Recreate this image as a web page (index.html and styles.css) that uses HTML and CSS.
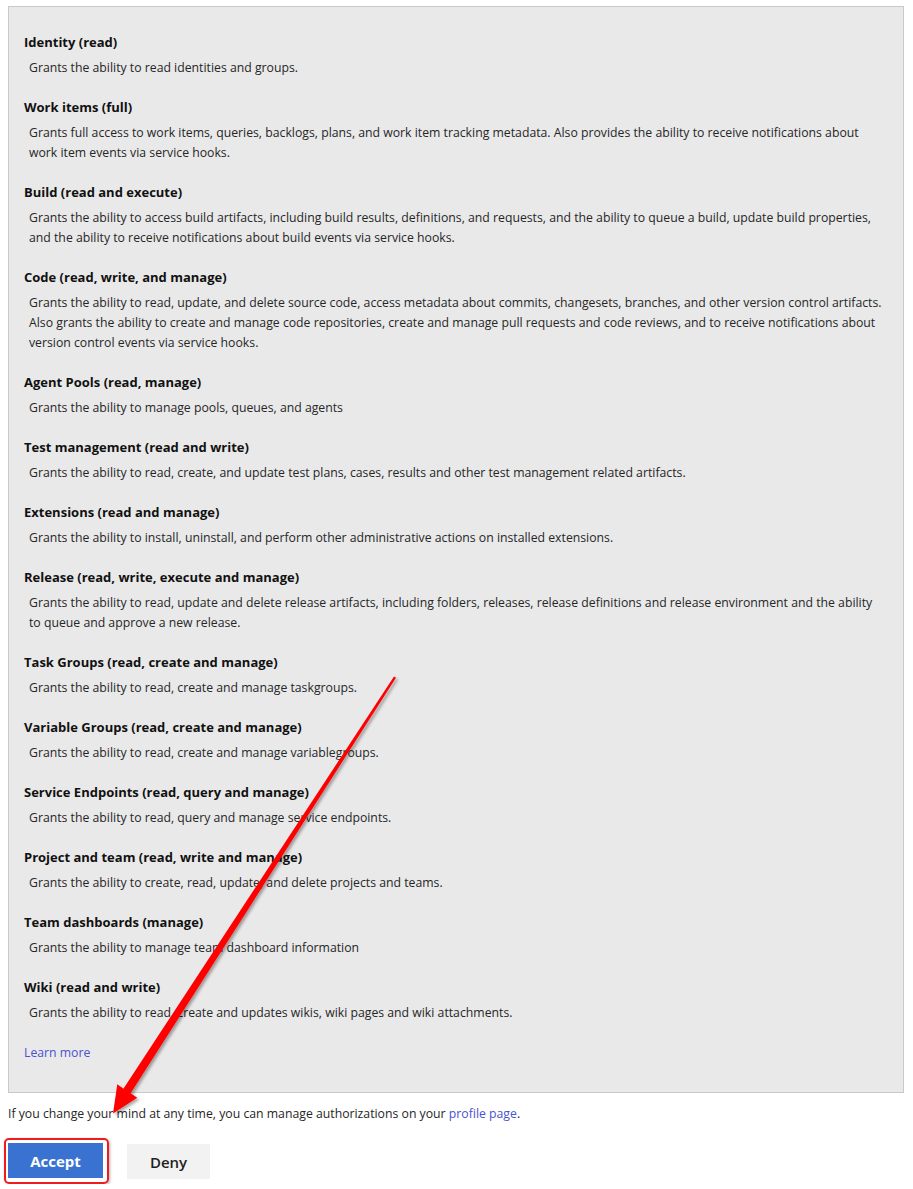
FILE: index.html
```html
<!DOCTYPE html>
<html lang="en">
<head>
<meta charset="utf-8">
<title>Authorize application</title>
<link rel="stylesheet" href="styles.css">
</head>
<body>
<div class="page">
  <div class="scopes">
    <div class="scope">
      <div class="scope-title">Identity (read)</div>
      <div class="scope-desc">Grants the ability to read identities and groups.</div>
    </div>
    <div class="scope">
      <div class="scope-title">Work items (full)</div>
      <div class="scope-desc">Grants full access to work items, queries, backlogs, plans, and work item tracking metadata. Also provides the ability to receive notifications about work item events via service hooks.</div>
    </div>
    <div class="scope">
      <div class="scope-title">Build (read and execute)</div>
      <div class="scope-desc">Grants the ability to access build artifacts, including build results, definitions, and requests, and the ability to queue a build, update build properties, and the ability to receive notifications about build events via service hooks.</div>
    </div>
    <div class="scope">
      <div class="scope-title">Code (read, write, and manage)</div>
      <div class="scope-desc">Grants the ability to read, update, and delete source code, access metadata about commits, changesets, branches, and other version control artifacts. Also grants the ability to create and manage code repositories, create and manage pull requests and code reviews, and to receive notifications about version control events via service hooks.</div>
    </div>
    <div class="scope">
      <div class="scope-title">Agent Pools (read, manage)</div>
      <div class="scope-desc">Grants the ability to manage pools, queues, and agents</div>
    </div>
    <div class="scope">
      <div class="scope-title">Test management (read and write)</div>
      <div class="scope-desc">Grants the ability to read, create, and update test plans, cases, results and other test management related artifacts.</div>
    </div>
    <div class="scope">
      <div class="scope-title">Extensions (read and manage)</div>
      <div class="scope-desc">Grants the ability to install, uninstall, and perform other administrative actions on installed extensions.</div>
    </div>
    <div class="scope">
      <div class="scope-title">Release (read, write, execute and manage)</div>
      <div class="scope-desc">Grants the ability to read, update and delete release artifacts, including folders, releases, release definitions and release environment and the ability to queue and approve a new release.</div>
    </div>
    <div class="scope">
      <div class="scope-title">Task Groups (read, create and manage)</div>
      <div class="scope-desc">Grants the ability to read, create and manage taskgroups.</div>
    </div>
    <div class="scope">
      <div class="scope-title">Variable Groups (read, create and manage)</div>
      <div class="scope-desc">Grants the ability to read, create and manage variablegroups.</div>
    </div>
    <div class="scope">
      <div class="scope-title">Service Endpoints (read, query and manage)</div>
      <div class="scope-desc">Grants the ability to read, query and manage service endpoints.</div>
    </div>
    <div class="scope">
      <div class="scope-title">Project and team (read, write and manage)</div>
      <div class="scope-desc">Grants the ability to create, read, update, and delete projects and teams.</div>
    </div>
    <div class="scope">
      <div class="scope-title">Team dashboards (manage)</div>
      <div class="scope-desc">Grants the ability to manage team dashboard information</div>
    </div>
    <div class="scope">
      <div class="scope-title">Wiki (read and write)</div>
      <div class="scope-desc">Grants the ability to read, create and updates wikis, wiki pages and wiki attachments.</div>
    </div>
    <a class="link learn-more" href="#">Learn more</a>
  </div>

  <p class="note">If you change your mind at any time, you can manage authorizations on your <a class="link" href="#">profile page</a>.</p>

  <div class="actions">
    <span class="highlight"><button class="btn btn-primary" type="button">Accept</button></span>
    <button class="btn btn-secondary" type="button">Deny</button>
  </div>
</div>

<svg class="annotation" width="913" height="1189" viewBox="0 0 913 1189" aria-hidden="true">
  <defs>
    <filter id="shadow" x="-20%" y="-20%" width="140%" height="140%">
      <feDropShadow dx="2" dy="2" stdDeviation="1.6" flood-color="#000" flood-opacity="0.35"/>
    </filter>
  </defs>
  <polygon filter="url(#shadow)" fill="#ff0000"
    points="396,677.7 130.6,1093.3 137.2,1097.7 113,1113.5 117.3,1084.3 123.4,1088.7 394,676.4"/>
</svg>
</body>
</html>
```
FILE: styles.css
```css
html, body {
  margin: 0;
  padding: 0;
  background: #ffffff;
}

body {
  font-family: "Open Sans", "Noto Sans", sans-serif;
  font-size: 12.25px;
  color: #222222;
  position: relative;
}

.page {
  padding: 6px 10px 0 8px;
}

.scopes {
  width: 896px;
  box-sizing: border-box;
  background: #e9e9e9;
  border: 1px solid #c9c9c9;
  padding: 25px 18px 29px 15px;
}

.scope {
  margin-bottom: 19px;
}

.scope-title {
  font-weight: 700;
  font-size: 13px;
  line-height: 20px;
  color: #111111;
}

.scope-desc {
  margin-top: 6px;
  padding-left: 5px;
  line-height: 20px;
  color: #262626;
}

.link {
  color: #4a52d0;
  text-decoration: none;
}

.learn-more {
  display: block;
  padding-top: 1px;
  line-height: 20px;
  width: max-content;
}

.note {
  margin: 11px 0 0;
  line-height: 20px;
  color: #262626;
}

.actions {
  display: flex;
  align-items: flex-start;
  gap: 18px;
  margin-top: 14px;
}

.highlight {
  display: inline-flex;
  margin-left: -4px;
  padding: 3px 4px 4px 2px;
  border: 2px solid #ee1c1c;
  border-radius: 5px;
  box-shadow: 1px 1px 3px rgba(0, 0, 0, 0.3);
}

.btn {
  font-family: "Open Sans", "Noto Sans", sans-serif;
  font-weight: 700;
  font-size: 15px;
  border: none;
  height: 35px;
  padding: 0;
  cursor: pointer;
}

.btn-primary {
  width: 95px;
  background: #3a72d1;
  color: #ffffff;
}

.btn-secondary {
  width: 83px;
  margin-top: 6px;
  background: #f2f2f2;
  color: #1f1f1f;
  font-weight: 600;
}

.annotation {
  position: absolute;
  top: 0;
  left: 0;
  pointer-events: none;
}
```
